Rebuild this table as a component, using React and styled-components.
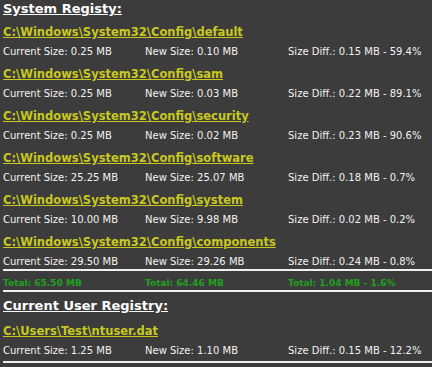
import React from 'react';
import styled, { createGlobalStyle } from 'styled-components';

const GlobalStyle = createGlobalStyle`
  body {
    margin: 0;
    background-color: #3c3c3c;
    font-family: "DejaVu Sans", Verdana, sans-serif;
  }
`;

const systemFiles = [
  { path: 'C:\\Windows\\System32\\Config\\default', current: '0.25 MB', size: '0.10 MB', diff: '0.15 MB - 59.4%' },
  { path: 'C:\\Windows\\System32\\Config\\sam', current: '0.25 MB', size: '0.03 MB', diff: '0.22 MB - 89.1%' },
  { path: 'C:\\Windows\\System32\\Config\\security', current: '0.25 MB', size: '0.02 MB', diff: '0.23 MB - 90.6%' },
  { path: 'C:\\Windows\\System32\\Config\\software', current: '25.25 MB', size: '25.07 MB', diff: '0.18 MB - 0.7%' },
  { path: 'C:\\Windows\\System32\\Config\\system', current: '10.00 MB', size: '9.98 MB', diff: '0.02 MB - 0.2%' },
  { path: 'C:\\Windows\\System32\\Config\\components', current: '29.50 MB', size: '29.26 MB', diff: '0.24 MB - 0.8%' },
];

const userFiles = [
  { path: 'C:\\Users\\Test\\ntuser.dat', current: '1.25 MB', size: '1.10 MB', diff: '0.15 MB - 12.2%' },
];

const App = () => {
  return (
    <>
      <GlobalStyle />
      <Report>
        <Heading>System Registy:</Heading>
        {systemFiles.map((file) => (
          <Entry key={file.path} file={file} />
        ))}
        <Divider />
        <Row total>
          <Cell>Total: 65.50 MB</Cell>
          <Cell>Total: 64.46 MB</Cell>
          <Cell>Total: 1.04 MB - 1.6%</Cell>
        </Row>
        <Divider />
        <Heading second>Current User Registry:</Heading>
        {userFiles.map((file) => (
          <Entry key={file.path} file={file} />
        ))}
        <Divider last />
      </Report>
    </>
  );
};

const Entry = ({ file }) => (
  <>
    <PathLink>{file.path}</PathLink>
    <Row>
      <Cell>Current Size: {file.current}</Cell>
      <Cell>New Size: {file.size}</Cell>
      <Cell>Size Diff.: {file.diff}</Cell>
    </Row>
  </>
);

const Report = styled.div`
  display: flex;
  flex-direction: column;
  padding: 0 4px 0 3px;
  color: #f2f2f2;
`;

const Heading = styled.div`
  font-size: 13px;
  font-weight: bold;
  text-decoration: underline;
  line-height: ${(p) => (p.second ? '21px' : '17px')};
  margin-top: ${(p) => (p.second ? '3px' : '0')};
  color: #ffffff;
`;

const PathLink = styled.div`
  font-size: 11.5px;
  font-weight: bold;
  text-decoration: underline;
  color: #c8c81e;
  line-height: 16px;
  padding: 7px 0 5px;
  white-space: nowrap;
`;

const Row = styled.div`
  display: grid;
  grid-template-columns: 142px 143px auto;
  font-size: ${(p) => (p.total ? '9px' : '10px')};
  line-height: 14px;
  padding-top: ${(p) => (p.total ? '5px' : '0')};
  white-space: nowrap;
  font-weight: ${(p) => (p.total ? 'bold' : 'normal')};
  color: ${(p) => (p.total ? '#20a020' : '#f2f2f2')};
`;

const Cell = styled.span``;

const Divider = styled.div`
  height: 2px;
  background-color: #f0f0f0;
  margin: ${(p) => (p.last ? '3px' : '0')} -4px 0 0;
`;

export default App;
